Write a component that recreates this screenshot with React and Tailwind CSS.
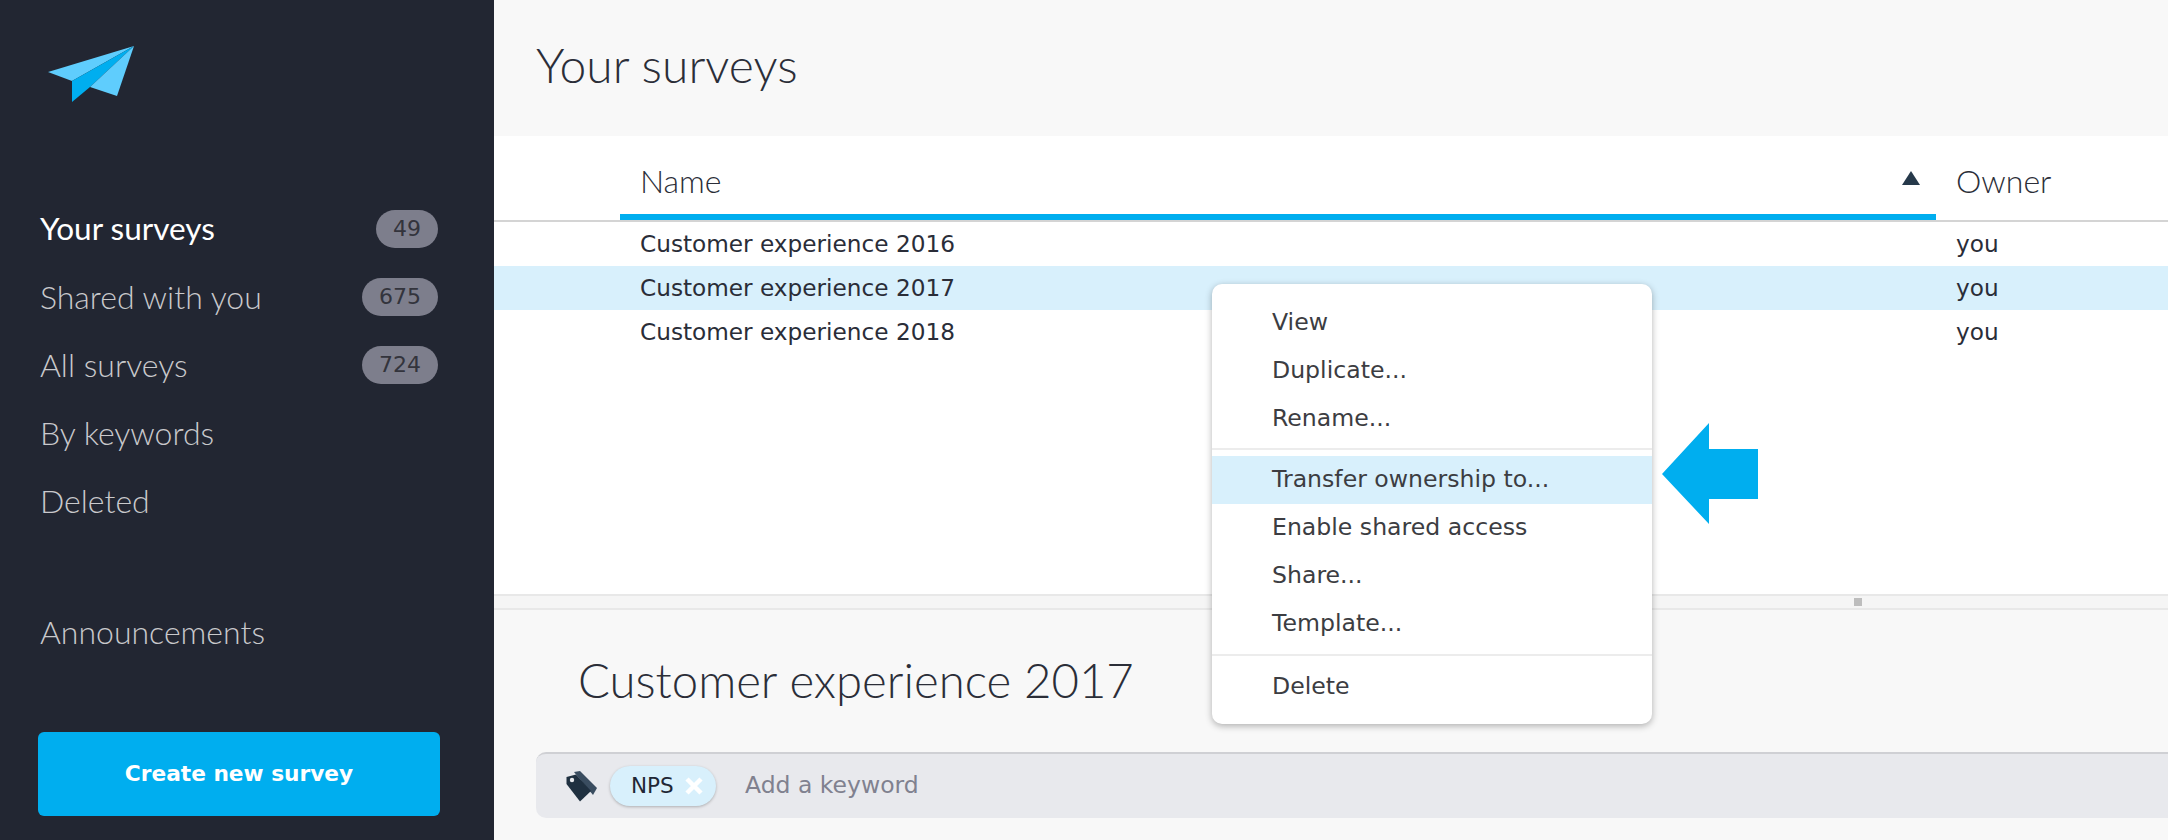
const heading = "font-['Lato','Open_Sans',sans-serif] font-light";
const ui = "font-['DejaVu_Sans',sans-serif]";

function Badge({ children }) {
  return (
    <span className={`${ui} flex h-[38px] items-center justify-center rounded-[19px] bg-[#7d7e8c] px-[17px] text-[22px] leading-none text-[#33343c]`}>
      {children}
    </span>
  );
}

function NavItem({ label, count, active }) {
  return (
    <div className="flex h-[68px] items-center justify-between">
      <span className={`${heading} ${active ? "text-[31.5px] text-white font-normal" : "text-[32px] text-[#c9c9cc]"}`}>{label}</span>
      {count && <Badge>{count}</Badge>}
    </div>
  );
}

function Logo() {
  return (
    <svg width="100" height="70" viewBox="40 40 100 70" className="mt-[40px]">
      <polygon points="134,46 48,72 72,81" fill="#5fcdfd" />
      <polygon points="134,46 72,81 72,102 90,87" fill="#00aeef" />
      <polygon points="134,46 90,87 117,96" fill="#5fcdfd" />
    </svg>
  );
}

function Row({ name, selected }) {
  return (
    <div className={`${ui} flex h-[44px] items-center text-[23.2px] text-[#2a2d38] ${selected ? "bg-[#d8f0fc]" : ""}`}>
      <span className="ml-[146px] w-[1316px]">{name}</span>
      <span>you</span>
    </div>
  );
}

function MenuItem({ children, active }) {
  return (
    <div className={`${ui} flex h-[48px] items-center pl-[60px] text-[23.6px] text-[#3c3d42] ${active ? "bg-[#d8f0fc]" : ""}`}>
      {children}
    </div>
  );
}

export default function App() {
  return (
    <div className="relative flex h-[840px] w-[2168px] overflow-hidden bg-[#f8f8f8]">
      <aside className="flex w-[494px] shrink-0 flex-col bg-[#222632] pl-[40px] pr-[56px]">
        <div className="h-[195px]"><Logo /></div>
        <NavItem label="Your surveys" count="49" active />
        <NavItem label="Shared with you" count="675" />
        <NavItem label="All surveys" count="724" />
        <NavItem label="By keywords" />
        <NavItem label="Deleted" />
        <div className="mt-[63px]"><NavItem label="Announcements" /></div>
        <button className={`${ui} -ml-[2px] mt-[66px] h-[84px] w-[402px] rounded-[6px] bg-[#00aeef] text-[21.7px] font-bold text-white`}>
          Create new survey
        </button>
      </aside>

      <main className="flex min-w-0 flex-1 flex-col">
        <header className="flex h-[136px] shrink-0 items-center pb-[6px] pl-[42px]">
          <h1 className={`${heading} text-[48px] text-[#2b2e38]`}>Your surveys</h1>
        </header>
        <section className="flex h-[458px] shrink-0 flex-col bg-white">
          <div className="flex h-[86px] border-b-2 border-[#d4d4d4]">
            <div className="ml-[126px] flex h-[84px] w-[1316px] items-center justify-between border-b-[6px] border-[#00aeef] pl-[20px] pr-[16px] pt-[12px]">
              <span className={`${heading} text-[32px] text-[#2b2e38]`}>Name</span>
              <svg width="18" height="14" viewBox="0 0 18 14" className="-mt-[6px]"><polygon points="9,0 18,14 0,14" fill="#26394a" /></svg>
            </div>
            <span className={`${heading} ml-[20px] flex h-[78px] items-center pt-[12px] text-[32px] text-[#2b2e38]`}>Owner</span>
          </div>
          <Row name="Customer experience 2016" />
          <Row name="Customer experience 2017" selected />
          <Row name="Customer experience 2018" />
        </section>
        <div className="relative h-[16px] shrink-0 border-y-2 border-[#e8e8e8] bg-[#f5f5f5]">
          <div className="absolute left-[1360px] top-[2px] h-[8px] w-[8px] bg-[#bdbdbd]" />
        </div>
        <div className="flex flex-1 flex-col pl-[42px]">
          <h2 className={`${heading} mt-[40px] pl-[42px] text-[47.3px] leading-[60px] text-[#2b2e38]`}>Customer experience 2017</h2>
          <div className={`mt-[42px] flex h-[66px] items-center rounded-l-[10px] border-t-2 border-[#cfd0d4] bg-[#e8e9ed] pl-[30px] ${ui}`}>
            <svg width="31" height="31" viewBox="0 0 31 31">
              <path d="M8 1 L14 0 L31 17 L27 24 Z" fill="#3a4d60" />
              <path d="M0.5 6 L0.5 13 L14 30.5 L25 20 L10 3.5 Z" fill="#1f3040" />
              <circle cx="6" cy="9" r="2.2" fill="#e8e9ed" />
            </svg>
            <span className="ml-[13px] flex h-[40px] w-[106px] items-center rounded-[20px] bg-[#d8f0fc] pl-[21px] text-[21.5px] text-[#1f2735] shadow-[0_1px_3px_rgba(0,0,0,0.25)]">
              NPS
              <svg width="20" height="20" viewBox="0 0 20 20" className="ml-[10px]">
                <path d="M3 3 L17 17 M17 3 L3 17" stroke="#fff" strokeWidth="4.5" />
              </svg>
            </span>
            <span className="ml-[29px] text-[23.5px] text-[#80818f]">Add a keyword</span>
          </div>
        </div>
      </main>

      <div className="absolute left-[1212px] top-[284px] w-[440px] rounded-[10px] bg-white pb-[13px] pt-[15px] shadow-[0_2px_7px_rgba(0,0,0,0.3)]">
        <MenuItem>View</MenuItem>
        <MenuItem>Duplicate...</MenuItem>
        <MenuItem>Rename...</MenuItem>
        <div className="mb-[6px] mt-[5px] h-[2px] bg-[#ececec]" />
        <MenuItem active>Transfer ownership to...</MenuItem>
        <MenuItem>Enable shared access</MenuItem>
        <MenuItem>Share...</MenuItem>
        <MenuItem>Template...</MenuItem>
        <div className="mb-[7px] mt-[6px] h-[2px] bg-[#ececec]" />
        <MenuItem>Delete</MenuItem>
      </div>

      <svg width="96" height="102" viewBox="0 0 96 102" className="absolute left-[1662px] top-[423px]">
        <polygon points="0,51 47,0 47,26 96,26 96,76 47,76 47,101" fill="#00aeef" />
      </svg>
    </div>
  );
}
